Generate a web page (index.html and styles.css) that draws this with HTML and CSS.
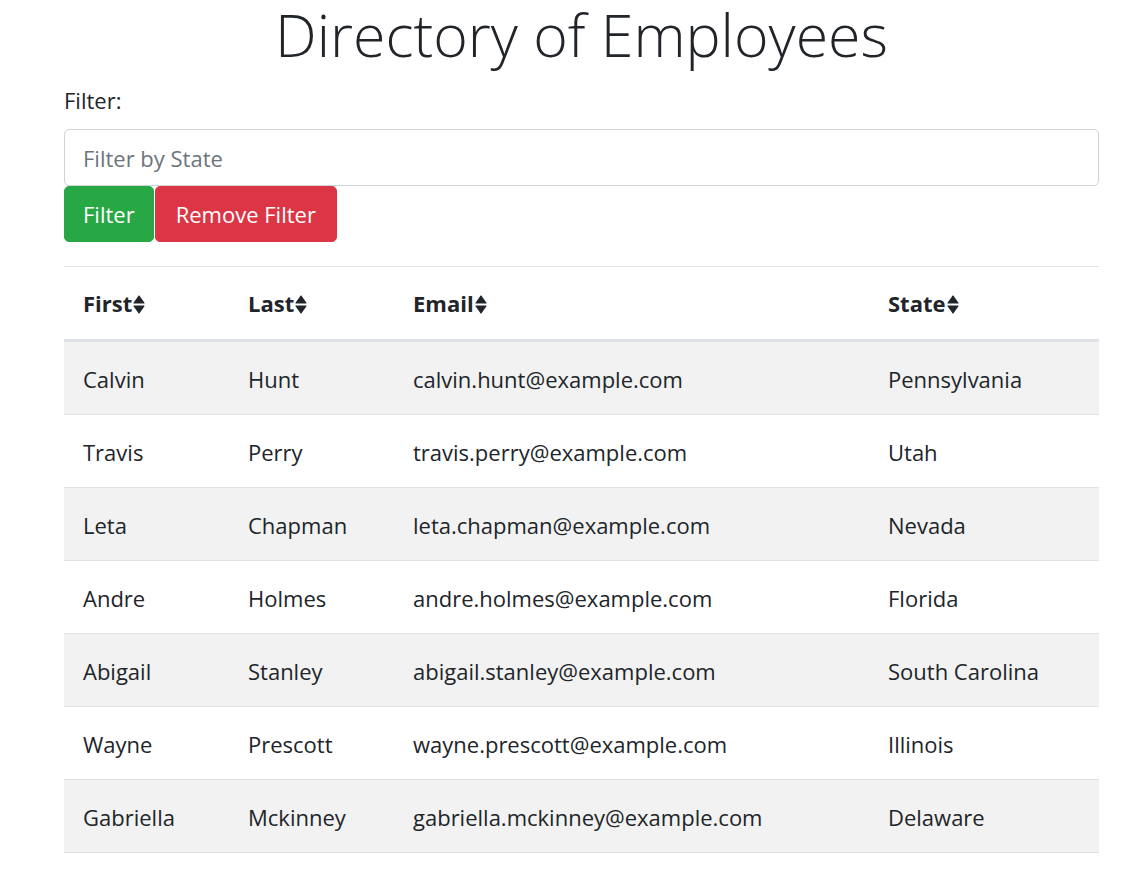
FILE: index.html
```html
<!DOCTYPE html>
<html lang="en">
<head>
<meta charset="utf-8">
<title>Directory of Employees</title>
<link rel="stylesheet" href="styles.css">
</head>
<body>
<div class="container">
  <h1 class="title">Directory of Employees</h1>
  <form class="filter-form">
    <label class="filter-label" for="state">Filter:</label>
    <input class="filter-input" id="state" type="text" placeholder="Filter by State">
    <div class="btn-row">
      <button type="button" class="btn btn-green">Filter</button>
      <button type="button" class="btn btn-red">Remove Filter</button>
    </div>
  </form>
  <table class="emp-table">
    <colgroup>
      <col class="c1"><col class="c2"><col class="c3"><col class="c4">
    </colgroup>
    <thead>
      <tr>
        <th>First<svg class="sort" viewBox="0 0 12 19"><path d="M6 1 L11 8 H1 Z M1 11 H11 L6 18 Z"/></svg></th>
        <th>Last<svg class="sort" viewBox="0 0 12 19"><path d="M6 1 L11 8 H1 Z M1 11 H11 L6 18 Z"/></svg></th>
        <th>Email<svg class="sort" viewBox="0 0 12 19"><path d="M6 1 L11 8 H1 Z M1 11 H11 L6 18 Z"/></svg></th>
        <th>State<svg class="sort" viewBox="0 0 12 19"><path d="M6 1 L11 8 H1 Z M1 11 H11 L6 18 Z"/></svg></th>
      </tr>
    </thead>
    <tbody>
      <tr><td>Calvin</td><td>Hunt</td><td>calvin.hunt@example.com</td><td>Pennsylvania</td></tr>
      <tr><td>Travis</td><td>Perry</td><td>travis.perry@example.com</td><td>Utah</td></tr>
      <tr><td>Leta</td><td>Chapman</td><td>leta.chapman@example.com</td><td>Nevada</td></tr>
      <tr><td>Andre</td><td>Holmes</td><td>andre.holmes@example.com</td><td>Florida</td></tr>
      <tr><td>Abigail</td><td>Stanley</td><td>abigail.stanley@example.com</td><td>South Carolina</td></tr>
      <tr><td>Wayne</td><td>Prescott</td><td>wayne.prescott@example.com</td><td>Illinois</td></tr>
      <tr><td>Gabriella</td><td>Mckinney</td><td>gabriella.mckinney@example.com</td><td>Delaware</td></tr>
    </tbody>
  </table>
</div>
</body>
</html>
```
FILE: styles.css
```css
html, body {
  margin: 0;
  padding: 0;
  background: #fff;
}
body {
  font-family: "Open Sans", "Noto Sans", "Liberation Sans", sans-serif;
  font-size: 22px;
  line-height: 30px;
  color: #212529;
}
.container {
  width: 1035px;
  margin: 0 0 0 64px;
}
.title {
  margin: 0;
  text-align: center;
  font-size: 59px;
  font-weight: 350;
  line-height: 68px;
}
.filter-form {
  display: flex;
  flex-direction: column;
  align-items: flex-start;
}
.filter-label {
  display: block;
  margin: 17px 0 14px;
  line-height: 30px;
}
.filter-input {
  box-sizing: border-box;
  width: 100%;
  height: 57px;
  padding: 0 18px;
  font: inherit;
  color: #495057;
  border: 1px solid #ced4da;
  border-radius: 5px;
  background: #fff;
  outline: none;
}
.filter-input::placeholder {
  color: #6c757d;
  opacity: 1;
}
.btn-row {
  display: flex;
  gap: 1px;
}
.btn {
  box-sizing: border-box;
  height: 56px;
  padding: 0 19px;
  font: inherit;
  color: #fff;
  border: 1px solid transparent;
  border-radius: 5px;
  cursor: pointer;
}
.btn-green {
  background: #28a745;
  border-color: #28a745;
  padding: 0 18px;
}
.btn-red {
  background: #dc3545;
  border-color: #dc3545;
  padding: 0 20px;
}
.emp-table {
  margin-top: 24px;
  width: 100%;
  border-collapse: separate;
  border-spacing: 0;
  table-layout: fixed;
}
.c1 { width: 165px; }
.c2 { width: 165px; }
.c3 { width: 475px; }
.c4 { width: auto; }
.emp-table th,
.emp-table td {
  text-align: left;
  padding: 22px 19px 20px;
  line-height: 30px;
  vertical-align: top;
  white-space: nowrap;
}
.emp-table td {
  border-bottom: 1px solid #dee2e6;
}
.emp-table th {
  font-weight: 700;
  border-top: 1px solid #dee2e6;
  border-bottom: 3px solid #dee2e6;
  padding: 21px 19px;
}
.emp-table tbody tr:nth-child(odd) td {
  background: #f2f2f2;
}
.sort {
  width: 12px;
  height: 19px;
  margin-left: 1px;
  vertical-align: -2px;
  fill: #212529;
  stroke: #212529;
  stroke-width: 1.2;
  stroke-linejoin: round;
}
```
